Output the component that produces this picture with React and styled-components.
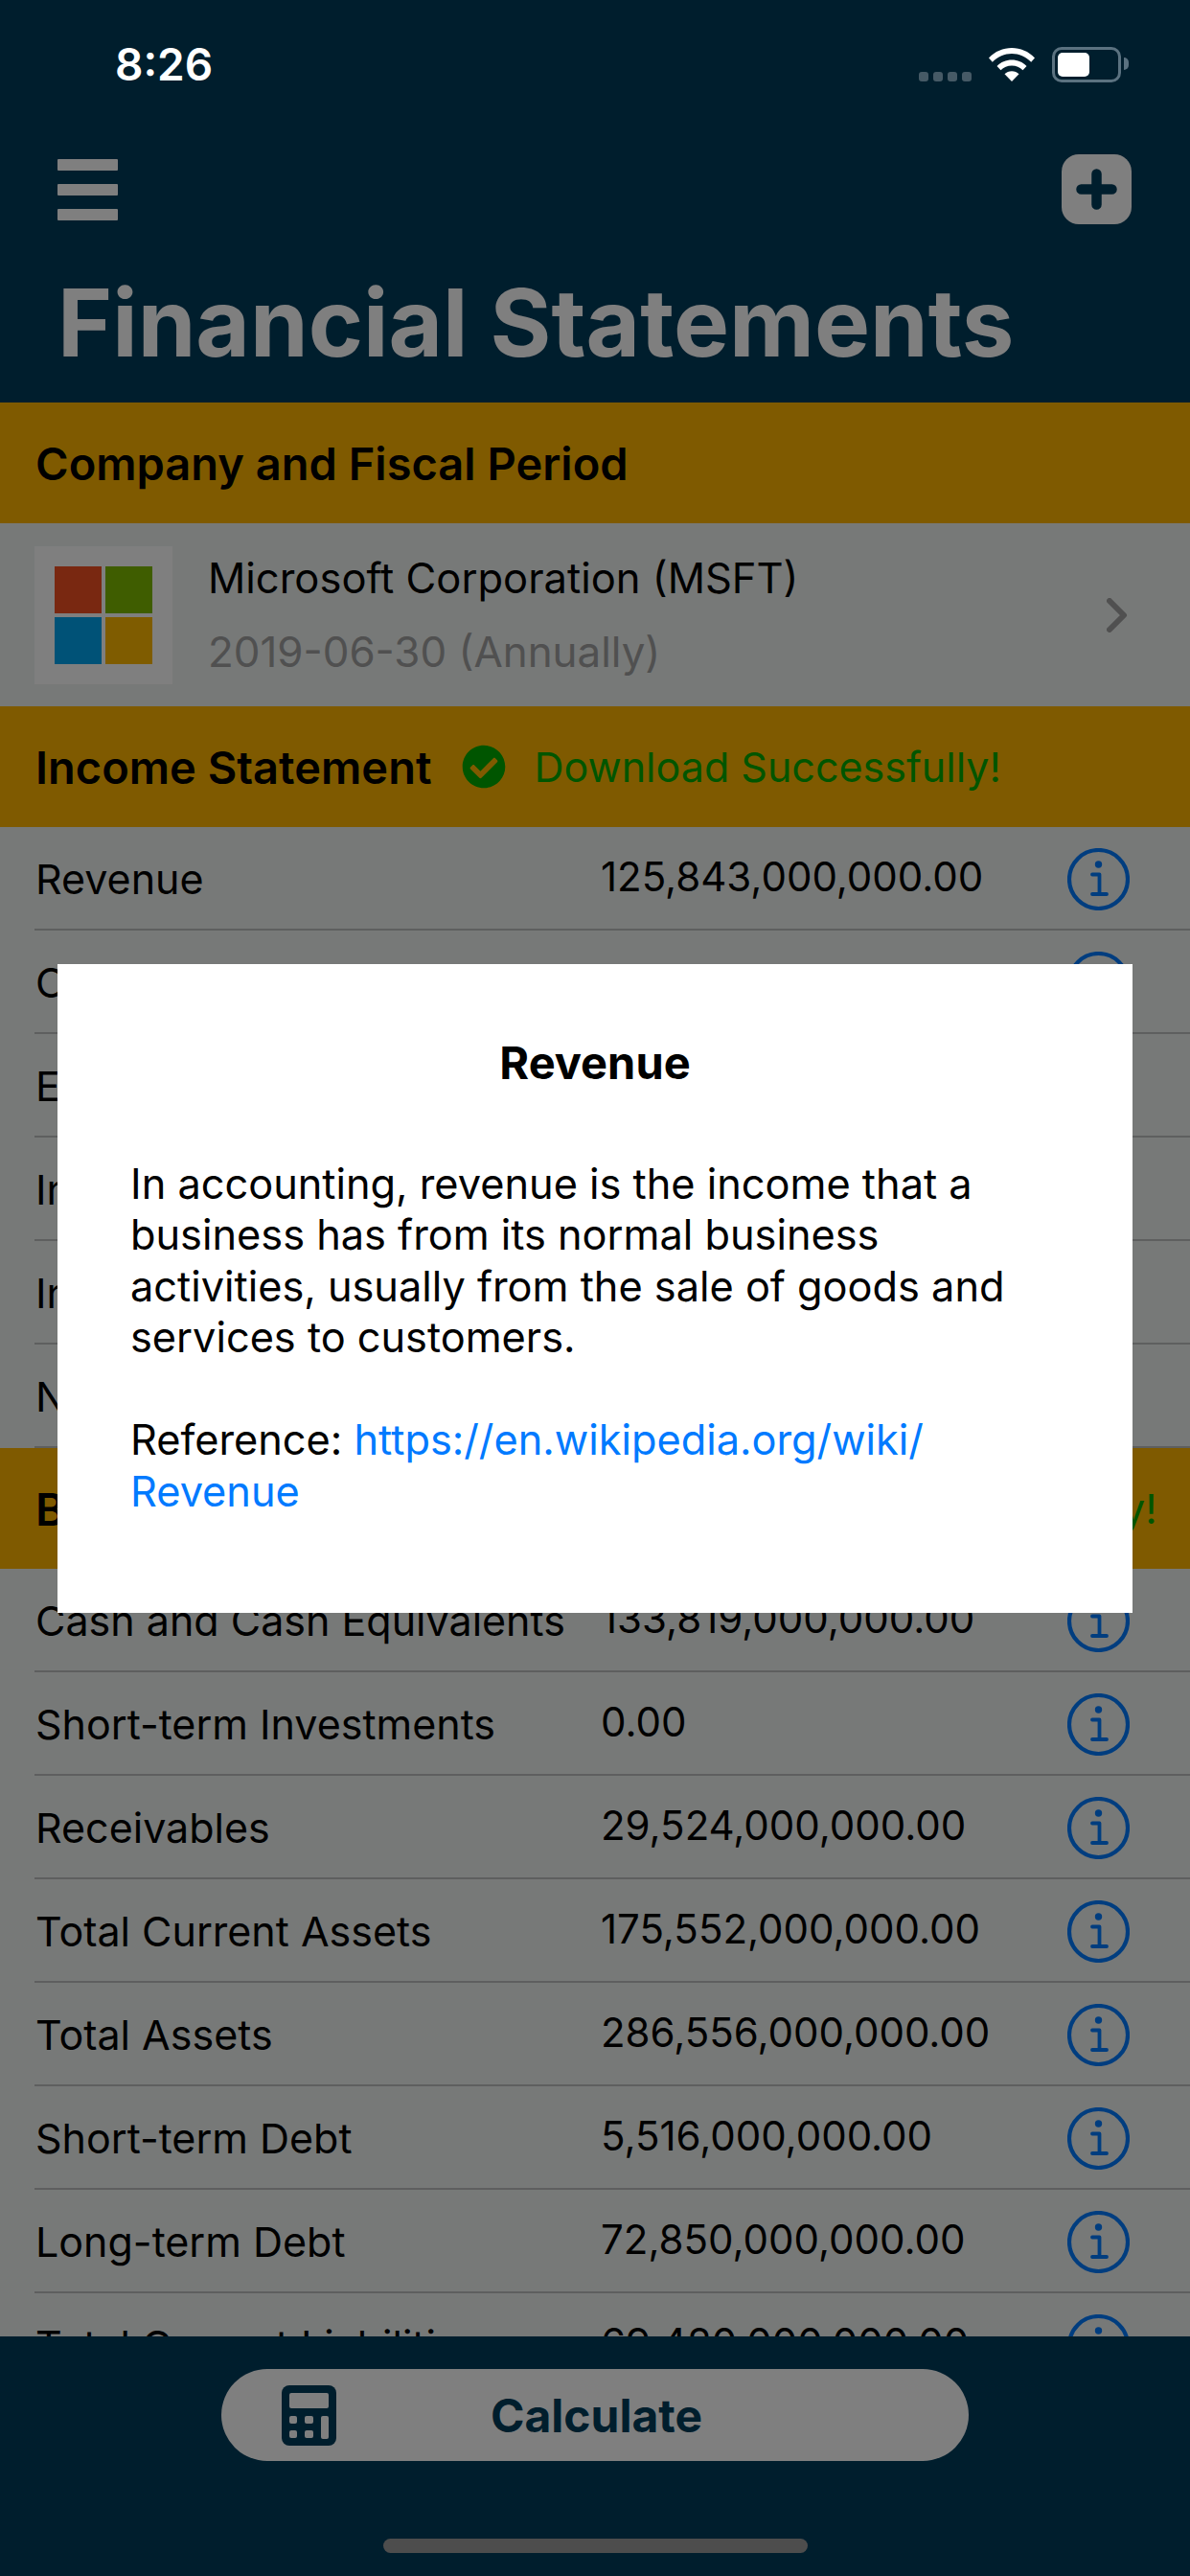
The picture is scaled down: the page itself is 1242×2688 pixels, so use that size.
import React from "react";
import styled, { createGlobalStyle } from "styled-components";
import { FaCheckCircle } from "react-icons/fa";

const GlobalStyle = createGlobalStyle`
  html, body {
    margin: 0;
    padding: 0;
    background: #003c5a;
  }
  * {
    box-sizing: border-box;
  }
`;

const incomeRows = [
  { label: "Revenue", value: "125,843,000,000.00" },
  { label: "Cost of Revenue", value: "42,910,000,000.00" },
  { label: "EBIT", value: "42,959,000,000.00" },
  { label: "Interest Expense", value: "2,686,000,000.00" },
  { label: "Income Tax Expense", value: "4,448,000,000.00" },
  { label: "Net Income", value: "39,240,000,000.00" },
];

const balanceRows = [
  { label: "Cash and Cash Equivalents", value: "133,819,000,000.00" },
  { label: "Short-term Investments", value: "0.00" },
  { label: "Receivables", value: "29,524,000,000.00" },
  { label: "Total Current Assets", value: "175,552,000,000.00" },
  { label: "Total Assets", value: "286,556,000,000.00" },
  { label: "Short-term Debt", value: "5,516,000,000.00" },
  { label: "Long-term Debt", value: "72,850,000,000.00" },
  { label: "Total Current Liabilities", value: "69,420,000,000.00" },
];

const InfoIcon = () => (
  <InfoSvg viewBox="0 0 65 65" fill="none">
    <circle cx="32.5" cy="32.5" r="30.500" stroke="#007aff" strokeWidth="4.200" />
    <circle cx="32.500" cy="17" r="3.700" fill="#007aff" />
    <path
      d="M26 27.500h7.500v20M26 48h15"
      stroke="#007aff"
      strokeWidth="3.800"
      strokeLinecap="round"
      strokeLinejoin="round"
    />
  </InfoSvg>
);

const CalculatorIcon = () => (
  <CalculatorSvg viewBox="0 0 57 63">
    <rect width="57" height="63" rx="8" fill="#003c5a" />
    <rect x="8" y="8" width="41" height="16" rx="2" fill="#fff" />
    <rect x="8" y="32" width="8" height="8" rx="2" fill="#fff" />
    <rect x="24" y="32" width="9" height="8" rx="2" fill="#fff" />
    <rect x="8" y="47" width="8" height="8" rx="2" fill="#fff" />
    <rect x="24" y="47" width="9" height="8" rx="2" fill="#fff" />
    <rect x="41" y="32" width="8" height="24" rx="2" fill="#fff" />
  </CalculatorSvg>
);

const DataRow = ({ label, value }) => (
  <Row>
    <RowLabel>{label}</RowLabel>
    <RowValue>{value}</RowValue>
    <InfoIcon />
  </Row>
);

const App = () => {
  return (
    <Screen>
      <GlobalStyle />
      <Header>
        <NavBar>
          <MenuButton>
            <span />
            <span />
            <span />
          </MenuButton>
          <svg width="73" height="73" viewBox="0 0 73 73">
            <rect width="73" height="73" rx="18" fill="#fff" />
            <path
              d="M36.500 20.500v32M20.500 36.500h32"
              stroke="#003c5a"
              strokeWidth="10.500"
              strokeLinecap="round"
            />
          </svg>
        </NavBar>
        <Title>Financial Statements</Title>
      </Header>

      <Content>
        <SectionHeader>
          <SectionTitle>Company and Fiscal Period</SectionTitle>
        </SectionHeader>

        <CompanyRow>
          <LogoTile>
            <LogoGrid>
              <LogoSquare $color="#f25022" />
              <LogoSquare $color="#7fba00" />
              <LogoSquare $color="#00a4ef" />
              <LogoSquare $color="#ffb900" />
            </LogoGrid>
          </LogoTile>
          <CompanyText>
            <CompanyName>Microsoft Corporation (MSFT)</CompanyName>
            <CompanyPeriod>2019-06-30 (Annually)</CompanyPeriod>
          </CompanyText>
          <svg width="22" height="36" viewBox="0 0 22 36" fill="none">
            <path
              d="M3 3l15 15L3 33"
              stroke="#a0a0a0"
              strokeWidth="6"
              strokeLinecap="round"
              strokeLinejoin="round"
            />
          </svg>
        </CompanyRow>

        <SectionHeader $gap={32}>
          <SectionTitle>Income Statement</SectionTitle>
          <FaCheckCircle size={46} color="#00ab00" />
          <SuccessText>Download Successfully!</SuccessText>
        </SectionHeader>
        {incomeRows.map((row) => (
          <DataRow key={row.label} {...row} />
        ))}

        <SectionHeader $gap={35}>
          <SectionTitle>Balance Sheet Statement</SectionTitle>
          <FaCheckCircle size={46} color="#00ab00" />
          <SuccessText>Download Successfully!</SuccessText>
        </SectionHeader>
        {balanceRows.map((row) => (
          <DataRow key={row.label} {...row} />
        ))}
      </Content>

      <BottomBar>
        <CalculateButton>
          <CalculatorIcon />
          <CalculateLabel>Calculate</CalculateLabel>
        </CalculateButton>
      </BottomBar>

      <Overlay>
        <Modal>
          <ModalTitle>Revenue</ModalTitle>
          <ModalText>
            In accounting, revenue is the income that a business has from its
            normal business activities, usually from the sale of goods and
            services to customers.
          </ModalText>
          <ModalText>
            Reference:{" "}
            <ModalLink href="#revenue">
              https://en.wikipedia.org/wiki/
              <wbr />
              Revenue
            </ModalLink>
          </ModalText>
        </Modal>
      </Overlay>

      <HomeIndicator />

      <StatusBar>
        <StatusTime>8:26</StatusTime>
        <StatusIcons>
          <SignalDots>
            <i />
            <i />
            <i />
            <i />
          </SignalDots>
          <svg width="48" height="36" viewBox="0 0 48 36" fill="#fff">
            <path d="M0 11.500C6.500 4.500 15 1 24 1s17.500 3.500 24 10.500l-3.800 4.200C38.600 10 31.500 7 24 7S9.400 10 3.800 15.700z" />
            <path d="M8.500 20C12.600 15.800 18 13.500 24 13.500S35.400 15.800 39.500 20l-4 4.200C32.500 21.300 28.500 19.600 24 19.600s-8.500 1.700-11.500 4.600z" />
            <path d="M16.500 28.300c2-2 4.600-3 7.500-3s5.500 1 7.500 3L24 36z" />
          </svg>
          <Battery>
            <BatteryLevel />
            <BatteryCap />
          </Battery>
        </StatusIcons>
      </StatusBar>
    </Screen>
  );
};

const Screen = styled.div`
  position: relative;
  display: flex;
  flex-direction: column;
  width: 1242px;
  height: 2688px;
  overflow: hidden;
  background: #003c5a;
  font-family: Inter, "Liberation Sans", sans-serif;
`;

const StatusBar = styled.div`
  position: absolute;
  top: 0;
  left: 0;
  right: 0;
  height: 132px;
  padding: 44px 72px 0 120px;
  display: flex;
  justify-content: space-between;
  align-items: flex-start;
`;

const StatusTime = styled.div`
  color: #fff;
  font-size: 46px;
  line-height: 46px;
  font-weight: 600;
`;

const StatusIcons = styled.div`
  display: flex;
  align-items: flex-start;
  gap: 18px;
  padding-top: 5px;
`;

const SignalDots = styled.div`
  display: flex;
  gap: 5px;
  margin-top: 26px;

  i {
    display: block;
    width: 10px;
    height: 10px;
    border-radius: 3px;
    background: #465a66;
  }
`;

const Battery = styled.div`
  position: relative;
  width: 72px;
  height: 37px;
  border: 3px solid #5b7280;
  border-radius: 10px;
  padding: 3px;
`;

const BatteryLevel = styled.div`
  width: 33px;
  height: 25px;
  border-radius: 5px;
  background: #fff;
`;

const BatteryCap = styled.div`
  position: absolute;
  right: -11px;
  top: 8px;
  width: 5px;
  height: 13px;
  border-radius: 0 6px 6px 0;
  background: #5b7280;
`;

const Header = styled.header`
  flex: none;
  height: 420px;
  padding: 161px 61px 0 60px;
  background: #003c5a;
`;

const NavBar = styled.div`
  display: flex;
  justify-content: space-between;
  align-items: center;
`;

const MenuButton = styled.div`
  display: flex;
  flex-direction: column;
  gap: 14px;

  span {
    display: block;
    width: 63px;
    height: 12px;
    border-radius: 1px;
    background: #fff;
  }
`;

const Title = styled.h1`
  margin: 44px 0 0;
  color: #fff;
  font-size: 97.500px;
  line-height: 118px;
  font-weight: 700;
  white-space: nowrap;
`;

const Content = styled.main`
  flex: 1;
  min-height: 0;
  overflow: hidden;
  background: #eef2f0;
`;

const SectionHeader = styled.div`
  display: flex;
  align-items: center;
  height: 126px;
  padding-left: 37px;
  gap: ${(props) => props.$gap || 30}px;
  background: #ffb400;
  white-space: nowrap;
`;

const SectionTitle = styled.div`
  color: #000;
  font-size: 47px;
  font-weight: 600;
`;

const SuccessText = styled.div`
  margin-left: -3px;
  color: #00ab00;
  font-size: 43px;
`;

const CompanyRow = styled.div`
  display: flex;
  align-items: center;
  height: 191px;
  padding: 0 65px 0 36px;
`;

const LogoTile = styled.div`
  flex: none;
  display: flex;
  align-items: center;
  justify-content: center;
  width: 144px;
  height: 144px;
  background: #fff;
`;

const LogoGrid = styled.div`
  display: grid;
  grid-template-columns: 49px 49px;
  grid-template-rows: 49px 49px;
  gap: 4px;
`;

const LogoSquare = styled.div`
  background: ${(props) => props.$color};
`;

const CompanyText = styled.div`
  flex: 1;
  margin-left: 37px;
`;

const CompanyName = styled.div`
  color: #000;
  font-size: 43.500px;
  line-height: 50px;
`;

const CompanyPeriod = styled.div`
  margin-top: 27px;
  color: #a0a0a0;
  font-size: 43.900px;
  line-height: 50px;
`;

const Row = styled.div`
  position: relative;
  display: flex;
  align-items: center;
  height: 108px;
  padding-left: 37px;
  padding-right: 63px;

  &::after {
    content: "";
    position: absolute;
    left: 36px;
    right: 0;
    bottom: 0;
    height: 2px;
    background: #bcbfbe;
  }
`;

const RowLabel = styled.div`
  width: 590px;
  flex: none;
  color: #000;
  font-size: 43px;
  white-space: nowrap;
`;

const RowValue = styled.div`
  flex: 1;
  padding-bottom: 5px;
  color: #000;
  font-size: 42px;
  white-space: nowrap;
`;

const InfoSvg = styled.svg`
  flex: none;
  width: 65px;
  height: 65px;
`;

const BottomBar = styled.footer`
  flex: none;
  display: flex;
  justify-content: center;
  height: 250px;
  padding-top: 34px;
  background: #003c5a;
`;

const CalculateButton = styled.div`
  position: relative;
  display: flex;
  align-items: center;
  justify-content: center;
  width: 780px;
  height: 96px;
  border-radius: 48px;
  background: #fff;
`;

const CalculatorSvg = styled.svg`
  position: absolute;
  left: 63px;
  top: 17px;
  width: 57px;
  height: 63px;
`;

const CalculateLabel = styled.div`
  padding-left: 3px;
  color: #003c5a;
  font-size: 48px;
  font-weight: 700;
`;

const Overlay = styled.div`
  position: absolute;
  inset: 0;
  display: flex;
  align-items: center;
  justify-content: center;
  background: rgba(0, 0, 0, 0.5);
`;

const Modal = styled.div`
  width: 1122px;
  height: 677px;
  padding: 76px 116px 0 76px;
  background: #fff;
`;

const ModalTitle = styled.div`
  margin: 0 -40px 73px 0;
  color: #000;
  font-size: 47px;
  line-height: 54px;
  font-weight: 700;
  text-align: center;
`;

const ModalText = styled.p`
  margin: 0 0 53.600px;
  color: #000;
  font-size: 43.300px;
  line-height: 53.600px;
`;

const ModalLink = styled.a`
  color: #007aff;
  text-decoration: none;
`;

const HomeIndicator = styled.div`
  position: absolute;
  left: 400px;
  bottom: 24px;
  width: 443px;
  height: 15px;
  border-radius: 8px;
  background: #4d4d4d;
`;

export default App;
